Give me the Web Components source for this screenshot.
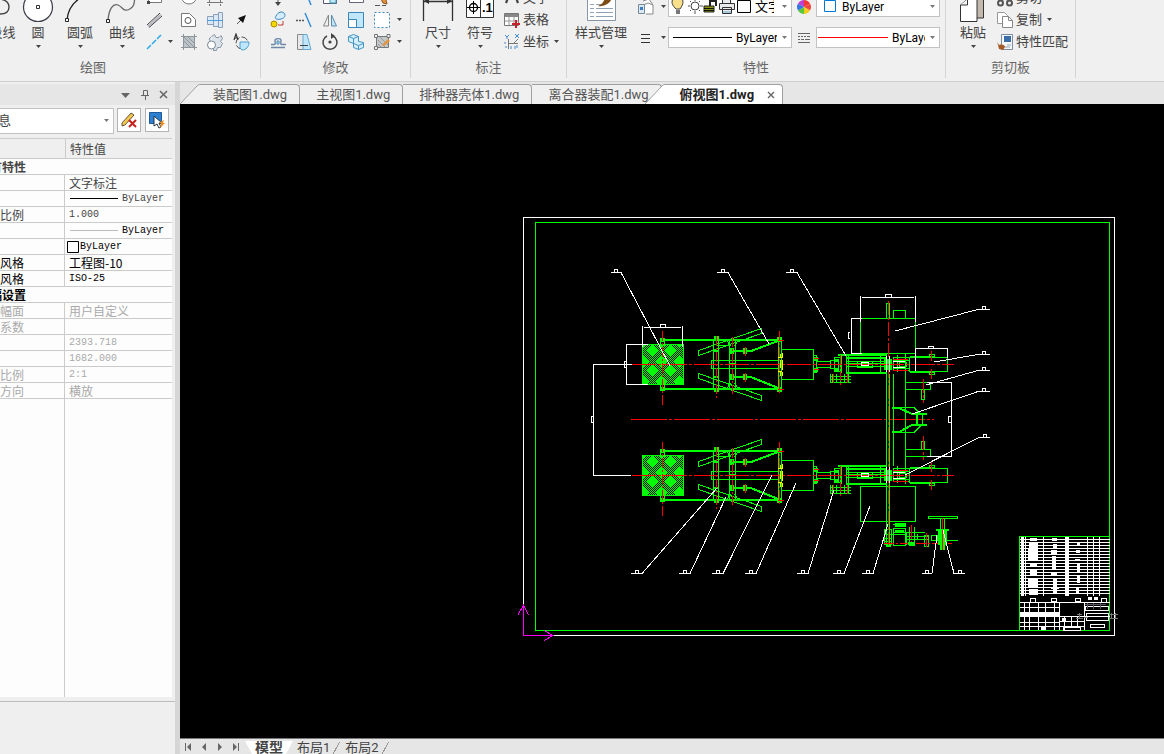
<!DOCTYPE html>
<html lang="zh-CN">
<head>
<meta charset="utf-8">
<title>俯视图1.dwg</title>
<style>
html, body { margin: 0; height: 100%; overflow: hidden; background: #e6e6e6; }
body { font: 13px/18px Roboto, "Noto Sans CJK SC", sans-serif; color: #444; }
</style>
</head>
<body>
<cad-app></cad-app>
<script>
const define = (name, html, setup) => {
  const t = document.createElement('template');
  t.innerHTML = html;
  customElements.define(name, class extends HTMLElement {
    connectedCallback() {
      if (this.shadowRoot) return;
      const r = this.attachShadow({ mode: 'open' });
      r.append(t.content.cloneNode(true));
      if (setup) setup(this, r);
    }
  });
};
const svg = (w, h, body, box) => `<svg width="${w}" height="${h}" viewBox="${box || `0 0 ${w} ${h}`}" fill="none" aria-hidden="true">${body}</svg>`;
const S = b => svg(18, 18, b);
const B = b => svg(36, 32, b, '0 -9 36 32');
const icons = {
  polyline: B('<path d="M6 14H22C28 14 31 11 31 7S28 0 22-1" stroke="#444" stroke-width="1.4"/>'),
  circle: B('<circle cx="18" cy="7" r="14.5" fill="#fff" stroke="#3a3d48" stroke-width="1.2"/><path d="M16.5 5.500h3v3h-3z" stroke="#333"/>'),
  arc: B('<path d="M5 20C6 9 11 2 20-3" stroke="#222" stroke-width="1.3"/><path d="M3.500 18.500h3v3h-3z" fill="#fff" stroke="#222"/>'),
  spline: B('<path d="M4 20C5 9 9 3 14 5S19 12 25 9.500 30 2 31-3" stroke="#666" stroke-width="1.3"/><path d="M2.500 19.500h3v3h-3z" fill="#fff" stroke="#222"/>'),
  dim: B('<path d="M3.500 21V-6M32.500 21V-6M4 1.500H32" stroke="#333" stroke-width="1.300"/><path d="M4 1l5-3v6zM32 1l-5-3v6z" fill="#333"/>'),
  symbol: B('<path d="M4.500-7v24.500h27V-7M18.500-7V17" fill="#fff" stroke="#333"/><circle cx="11.500" cy="7.500" r="4" stroke="#000" stroke-width="1.300"/><path d="M11.500 1v13M5 7.500h13" stroke="#000"/><text x="20" y="12" font-family="Liberation Sans" font-weight="700" font-size="13" fill="#000">.1</text>'),
  style: B('<path d="M4.500-8v28.500h28V-8" fill="#fff" stroke="#8496a8"/><path d="M7 4.500h4M7 8.500h4M7 12.500h4M7 16.500h4M13 8.500h17M13 12.500h17M13 16.500h17M13 4.500h5" stroke="#8fa1b4"/><path d="M15 6c5 1 12-2 14-8l-5-2c-3 2-2 7-9 10z" fill="#7d4c12"/>'),
  paste: B('<path d="M14.500-6h14v24h-14z" fill="#c4b8ae" stroke="#333"/><path d="M5.500 21.500V5l7-6h9.500v22.500z" fill="#fff" stroke="#333"/><path d="M5.500 5h7v-6" fill="#f5f5f5" stroke="#333"/>'),
  rect: S('<path d="M3.500 3.500h13v10h-13z" fill="#fff" stroke="#777"/><path d="M2 12h3v3H2z" fill="#444"/>'),
  mline: S('<path d="M3 15.500L16 3.500" stroke="#b9b9c4" stroke-width="2"/><path d="M2 14L15 2M4 16.500L17 5" stroke="#444"/>'),
  xline: S('<path d="M2 16l4-4M7 11l4-4M12 6l4-4" stroke="#28a8e8" stroke-width="1.500"/>'),
  ellipse: S('<ellipse cx="9" cy="9" rx="7" ry="6" fill="#fff" stroke="#777"/>'),
  region: S('<path d="M1.500 15.500v-13h8l6 6v7z" fill="#fff" stroke="#777"/><circle cx="8" cy="9.500" r="3" stroke="#555"/>'),
  hatch: S('<path d="M3.500 3.500h11v11h-11z" fill="#bcc4c8" stroke="#889"/><path d="M4 8l6 6M4 4l10 10M8 4l6 6M3.500 1v16M14.500 1v16M1 3.500h16M1 14.500h16" stroke="#8b979d"/>'),
  axis: S('<path d="M3.500 4v9.500h11V4M1 13.500h16M3.500 15v2M14.500 15v2" stroke="#777"/>'),
  shaft: S('<path d="M1.500 5.500h6v8h-6zM7.500 3.500h5v12h-5zM12.500 1.500h4v15h-4z" fill="#dbe9f6" stroke="#8ba0b8"/><path d="M1 9.500h16" stroke="#4a9fe0"/>'),
  gear: S('<path d="M5.500 3.500l3-2 1.500 3h3l2-2 1.500 3-2 3 2 2-2 4h-3l-1 3h-3v-3M5 9L3 6l2-2" fill="#dce2ea" stroke="#8a97a4"/><circle cx="5.500" cy="12" r="4" fill="#fff" stroke="#7a8794"/>'),
  arrow: S('<path d="M5 13l5-5" stroke="#555"/><path d="M14 4l-3 8-5-5z" fill="#111"/>'),
  contour: S('<circle cx="10" cy="10" r="6" stroke="#555" stroke-dasharray="7 2"/><path d="M8 9h9c0 5-3 8-7 8l-2-2z" fill="#bfe6fa" stroke="#4aa0cc"/><path d="M2 7l2-6 2 6M3 5h3" stroke="#333" stroke-width="1.200"/>'),
  move: S('<path d="M9 0v14M3 7h12" stroke="#555"/><path d="M9 17l-3-4h6z" fill="#444"/>'),
  trim: S('<path d="M4 9h5M12 9h5" stroke="#555" stroke-dasharray="2 1"/><path d="M10 1l6 15" stroke="#2a8ad8" stroke-width="1.400"/>'),
  array: S('<path d="M2.500 2.500h13v12h-13z" fill="#fff" stroke="#557"/><path d="M9 3h6v11H9z" fill="#bfe6fa" stroke="#49a"/>'),
  page: S('<path d="M2.500 1.500h14v12h-14z" fill="#fff" stroke="#667"/>'),
  erase: S('<path d="M6 6l4 8 4 1-1-4-5-8z" fill="#e4943a" stroke="#8a5520"/><path d="M2 16.500h5M9 16.500h4" stroke="#555"/>'),
  copy: S('<path d="M7 5c2-4 6-5 8-3s1 5-3 6-7 0-5-3z" fill="#d4ecfb" stroke="#3a87bb"/><circle cx="5" cy="13" r="3" fill="#f4d800" stroke="#a98c00"/><path d="M9 14h5v-4" stroke="#c63a30"/>'),
  extend: S('<path d="M1 9.500h9" stroke="#555" stroke-width="1.500" stroke-dasharray="2 1"/><path d="M10 2l6 14" stroke="#2a8ad8" stroke-width="1.400"/>'),
  mirror: S('<path d="M7.500 4v11h-5z" fill="#eee" stroke="#888"/><path d="M10.500 4v11h5z" fill="#bfe6fa" stroke="#5a8dac"/>'),
  scale: S('<path d="M1.500 1.500h15v15h-15z" fill="#bfe6fa" stroke="#3a87bb"/><path d="M1.500 8.500h8v8h-8z" fill="#fff" stroke="#3a87bb"/>'),
  select: S('<path d="M1.500 1.500h15v15h-15z" fill="#fff" stroke="#3a87bb" stroke-dasharray="2 2"/>'),
  offset: S('<path d="M2 14.500h14M2 11.500h3c2 0 1-2 1-4s6-3 6 0-1 4 1 4h4" stroke="#6d87a5" stroke-width="1.400"/><path d="M8 11V8h2v3z" stroke="#3a87bb"/>'),
  stretch: S('<path d="M2.500 1.500h7v15h-7z" fill="#e8e8e8" stroke="#888"/><path d="M8 1.500h4l4 15H8z" fill="#bfe6fa" stroke="#68a9cc"/><path d="M5 12.500h8" stroke="#444"/>'),
  rotate: S('<path d="M6 3a7 7 0 1 0 6 0" stroke="#444" stroke-width="1.500"/><path d="M10 0l4 3-4 3z" fill="#444"/><circle cx="9" cy="9" r="1.600" fill="#444"/>'),
  block: S('<path d="M1.500 3.500l5-2 5 2v5l5 1v5l-5 2-5-2v-4l-5-2z" fill="#d4eefb" stroke="#4394c2"/><path d="M1.500 3.500l5 2 5-2M6.500 5.500v5l5 2 5-2M11.500 12.500v4" stroke="#4394c2"/>'),
  edit: S('<path d="M3.500 3.500h12v11h-12z" fill="#c2c7ca" stroke="#777"/><path d="M5 7l7 7M5 11l3 3M7 4l8 8" stroke="#999"/><path d="M1.500 1.500h3v3h-3zM14 1.500h3v3h-3zM1.500 13.500h3v3h-3z" fill="#eee" stroke="#777"/><path d="M9 12l6-6 2 2-6 5z" fill="#e4943a"/>'),
  text: S('<path d="M3 14l5-13h2l5 13M5 10h8" stroke="#444" stroke-width="2.200"/>'),
  table: S('<path d="M1.500 2.500h14v12h-14z" fill="#fff" stroke="#777"/><path d="M2 3h13v3H2z" fill="#888"/><path d="M6 6v8M11 6v8M2 10h13" stroke="#999"/><path d="M13 9v8M9 13h8" stroke="#c8202a" stroke-width="2"/>'),
  coord: S('<path d="M5.500 6v10M5 10.500h10M10 11l5-5" stroke="#777"/><path d="M2 2l2 2 2-2M4 4v2M12 1l4 4M16 1l-4 4M2 9v2M2 14h2M8 13v3M12 13v3M14 12v3" stroke="#4489c8"/>'),
  match: S('<path d="M5.500 1.500h11v15h-11z" fill="#f4f6f8" stroke="#7d8ca0"/><path d="M8 3h7v6H8z" fill="#3b6ea8"/><path d="M11 12h4M9 14h5" stroke="#9ab"/><path d="M1 9l2 3c3-1 6 0 6 2l-2 3-4-1-1-4z" fill="#a65a24"/>'),
  pages: S('<path d="M1.500 1.500h7l3 3v8h-10z" fill="#fff" stroke="#999"/><path d="M6.500 5.500h6l4 4v7h-10z" fill="#fff" stroke="#888"/><path d="M12.500 5.500v4h4" stroke="#888"/>'),
  cut: S('<path d="M5 1l6 10M13 1L7 11" stroke="#555" stroke-width="1.600"/><circle cx="4.500" cy="14" r="2.500" stroke="#555" stroke-width="2"/><circle cx="13.500" cy="14" r="2.500" stroke="#555" stroke-width="2"/>'),
  layers: S('<path d="M6 3l6-2 4 6M5 8l6-3 5 2v9H9" fill="#fff" stroke="#888"/><path d="M1.500 6.500h6v9h-6z" fill="#dce8f2" stroke="#789"/><path d="M3 9h3v3H3z" fill="#3b7ec0"/>'),
  list: S('<path d="M4 5.500h9M4 9.500h9M4 13.500h9" stroke="#333"/>'),
  ltype: S('<path d="M3 4.500h12M3 7.500h12M3 10.500h12M3 13.500h12" stroke="#666"/><path d="M5 7.500h1M8 7.500h1M11 7.500h1M5 10.500h1M9 10.500h1" stroke="#f0f0f0"/>'),
  wheel: S('<g transform="translate(9 9)"><path d="M0 0V-7A7 7 0 0 1 6-3.500z" fill="#f03830"/><path d="M0 0L6-3.500A7 7 0 0 1 6 3.500z" fill="#f04840"/><path d="M0 0L6 3.500A7 7 0 0 1 0 7z" fill="#f4cc20"/><path d="M0 0V7A7 7 0 0 1-6 3.500z" fill="#58c838"/><path d="M0 0L-6 3.500A7 7 0 0 1-6-3.500z" fill="#3478e0"/><path d="M0 0L-6-3.500A7 7 0 0 1 0-7z" fill="#c040d0"/></g>'),
  brush: S('<path d="M2 12L11 2l3 2L5 14l-3 1z" fill="#f0c84a" stroke="#654"/><path d="M9 9l7 7M16 9l-7 7" stroke="#c8201c" stroke-width="2"/>'),
  pick: S('<path d="M1.500 1.500h12v11h-12z" fill="#2d7fd2" stroke="#205a98"/><path d="M6 5v10l3-2 2 4 2-1-2-4h3z" fill="#fff" stroke="#234"/><path d="M12 11l4-2-1 3h2l-5 5 1-4z" fill="#f08c1a"/>')
};
const tri = svg(7, 6, '<path d="M1 1h5L3.500 4z" fill="#444"/>');

define('tool-icon', `<style>:host{display:block;flex:none}svg{display:block}</style>`, (el, r) => {
  r.append(document.createRange().createContextualFragment(icons[el.getAttribute('name')]));
});

define('ribbon-group', `<style>
:host{display:flex;flex-direction:column;justify-content:flex-end;flex:none;box-sizing:border-box;height:78px;border-right:1px solid #d4d4d4}
.body{display:flex;align-items:flex-end;height:53px}
:host([end]) .body{justify-content:flex-end}
h2{margin:0;padding:6px 0 1px;font:inherit;line-height:18px;text-align:center;color:#666}
</style><div class="body"><slot></slot></div><h2></h2>`, (el, r) => { r.querySelector('h2').textContent = el.getAttribute('label'); });

define('big-tool', `<style>
:host{display:block;flex:none;width:42px}
button{display:flex;flex-direction:column;align-items:center;width:100%;padding:0 0 3px;border:0;background:none;font:inherit;color:inherit;white-space:nowrap}
.lab{margin:1px -9px 2px;line-height:18px} svg{display:block}
</style><button type="button"><tool-icon></tool-icon><span class="lab"><slot></slot></span>${tri}</button>`, (el, r) => {
  const i = document.createElement('tool-icon'); i.setAttribute('name', el.getAttribute('icon'));
  r.querySelector('tool-icon').replaceWith(i);
});

define('small-tool', `<style>
:host{display:block}
button{display:flex;align-items:center;justify-content:center;gap:2px;width:100%;height:22px;padding:0;border:0;background:none;font:inherit;color:inherit;white-space:nowrap}
:host([wide]) button{justify-content:flex-start}
svg{display:block;margin-left:2px}
:host([menu]:not([wide])) svg{margin:0}
</style><button type="button"><slot></slot></button>`, (el, r) => {
  const b = r.querySelector('button');
  const n = el.getAttribute('icon');
  if (n) { const i = document.createElement('tool-icon'); i.setAttribute('name', n); b.prepend(i); }
  if (el.hasAttribute('menu')) b.insertAdjacentHTML('beforeend', tri);
  if (el.title) b.setAttribute('aria-label', el.title);
});

define('value-combo', `<style>
:host{display:flex;align-items:center;box-sizing:border-box;height:21px;border:1px solid #c2c2c2;background:#fff;overflow:hidden}
select{appearance:none;flex:1;min-width:0;height:19px;margin:0;padding:0;border:0;background:none;font:12px/18px Roboto,"Noto Sans CJK SC",sans-serif;color:#000;text-overflow:clip}
svg{flex:none;margin:0 3px 0 4px}
:host([cjk]) select{font-size:13px}
:host([cjk]) svg{margin-left:7px}
:host([tall]){height:26px}
:host([tall]) select{height:24px;font-size:13px;padding-left:9px;color:#444}
</style><slot></slot><select><option></option></select>${tri.replace('#444', '#777')}`, (el, r) => {
  r.querySelector('option').textContent = el.getAttribute('value');
  r.querySelector('select').setAttribute('aria-label', el.getAttribute('label'));
});

define('cad-ribbon', `<style>
:host{display:flex;height:81px;flex:none;align-items:flex-start;background:#f0f0f0;border-bottom:1px solid #cfcfcf;overflow:hidden}
ribbon-group:first-of-type{margin-left:-74px;width:335px}
.tools{display:grid;grid-auto-rows:22px}
.draw{grid-template-columns:22px 11px 26px 26px 26px;padding-right:6px}
.modify{grid-template-columns:repeat(5,26px) 9px;padding:0 6px 0 4px}
.notes{width:63px;padding-left:2px}
.g3{padding-left:6px}
.g4{padding-left:3px}
.clip{width:77px;padding:0 2px 0 2px}
.g5{padding-left:6px}
.props{display:grid;grid-template-columns:26px 9px 124px 24px 124px;gap:10px 0;align-items:center;padding:0 5px 5px 1px;grid-auto-rows:21px}
svg{flex:none;display:block}
.flex{display:flex}
</style>
<ribbon-group label="绘图" end>
 <big-tool icon="polyline">多段线</big-tool><big-tool icon="circle">圆</big-tool><big-tool icon="arc">圆弧</big-tool><big-tool icon="spline">曲线</big-tool>
 <div class="tools draw">
 <small-tool icon="rect" title="矩形"></small-tool><span></span><small-tool icon="ellipse" title="椭圆"></small-tool><small-tool icon="axis" title="中心线"></small-tool><span></span>
 <small-tool icon="mline" title="平行线"></small-tool><span></span><small-tool icon="region" title="面域"></small-tool><small-tool icon="shaft" title="轴"></small-tool><small-tool icon="arrow" title="箭头"></small-tool>
 <small-tool icon="xline" title="构造线"></small-tool><small-tool menu title="更多直线"></small-tool><small-tool icon="hatch" title="填充"></small-tool><small-tool icon="gear" title="齿轮"></small-tool><small-tool icon="contour" title="局部放大"></small-tool>
 </div>
</ribbon-group>
<ribbon-group label="修改"><div class="tools modify">
 <small-tool icon="move" title="移动"></small-tool><small-tool icon="trim" title="裁剪"></small-tool><small-tool icon="array" title="阵列"></small-tool><small-tool icon="page" title="边界"></small-tool><small-tool icon="erase" title="删除"></small-tool><span></span>
 <small-tool icon="copy" title="复制对象"></small-tool><small-tool icon="extend" title="延伸"></small-tool><small-tool icon="mirror" title="镜像"></small-tool><small-tool icon="scale" title="缩放"></small-tool><small-tool icon="select" title="选择"></small-tool><small-tool menu title="选择方式"></small-tool>
 <small-tool icon="offset" title="偏移"></small-tool><small-tool icon="stretch" title="拉伸"></small-tool><small-tool icon="rotate" title="旋转"></small-tool><small-tool icon="block" title="块"></small-tool><small-tool icon="edit" title="编辑填充"></small-tool><small-tool menu title="更多编辑"></small-tool>
</div></ribbon-group>
<ribbon-group label="标注"><div class="flex g3"><big-tool icon="dim">尺寸</big-tool><big-tool icon="symbol">符号</big-tool></div>
 <div class="tools notes"><small-tool wide icon="text">文字</small-tool><small-tool wide icon="table">表格</small-tool><small-tool wide menu icon="coord">坐标</small-tool></div>
</ribbon-group>
<ribbon-group label="特性"><div class="flex g4"><big-tool icon="style" style="width:62px">样式管理</big-tool></div>
 <div class="props">
 <small-tool icon="layers" title="图层"></small-tool><small-tool menu title="图层菜单"></small-tool>
 <value-combo cjk label="图层" value="文字">${svg(86, 19, `
  <path d="M7 12c-3-3-4-5-4-7a5 5 0 0 1 11 0c0 2-1 4-3 7z" fill="#f8e08a" stroke="#444"/><path d="M7 13h4v4H7z" fill="#777"/>
  <circle cx="26" cy="9" r="4" fill="#fff" stroke="#444"/><path d="M26 2v2M26 14v3M19 9h2M31 9h3M21 4l1 1M30 13l1 1M21 14l1-1M30 5l1-1" stroke="#555"/>
  <path d="M35 9h10v6H35z" fill="#8a9010" stroke="#222"/><path d="M41 9V4h6v5" stroke="#222" stroke-width="2"/><path d="M35 11.500h10M35 13.500h10" stroke="#111"/>
  <path d="M53.500 6V1.500h8V6M50.500 6.500h15v6h-15zM53.500 10.500h9v6h-9z" fill="#e8eaec" stroke="#333"/><path d="M54 15h8" stroke="#68a9cc"/>
  <path d="M68.500 3.500h13v12h-13z" fill="#fff" stroke="#000"/>`)}</value-combo>
 <small-tool icon="wheel" title="颜色"></small-tool>
 <value-combo label="颜色" value="ByLayer">${svg(25, 19, '<path d="M7.500 3.500h11v11h-11z" fill="#fff" stroke="#0078d7"/>')}</value-combo>
 <small-tool icon="list" title="线宽"></small-tool><small-tool menu title="线宽菜单"></small-tool>
 <value-combo label="线宽" value="ByLayer">${svg(67, 19, '<path d="M4 9.500h59" stroke="#000"/>')}</value-combo>
 <small-tool icon="ltype" title="线型"></small-tool>
 <value-combo label="线型" value="ByLayer">${svg(75, 19, '<path d="M1 9.500h70" stroke="#f00"/>')}</value-combo>
 </div>
</ribbon-group>
<ribbon-group label="剪切板"><div class="flex g5"><big-tool icon="paste">粘贴</big-tool></div>
 <div class="tools clip"><small-tool wide icon="cut">剪切</small-tool><small-tool wide menu icon="pages">复制</small-tool><small-tool wide icon="match">特性匹配</small-tool></div>
</ribbon-group>`);

define('property-panel', `<style>
:host{display:flex;flex-direction:column;flex:none;box-sizing:border-box;width:188px;margin-left:-12px;padding-top:2px;background:#efefef;border-right:1px solid #d6d6d6}
header{display:flex;justify-content:flex-end;align-items:center;gap:8px;height:21px;padding-right:6px;background:#e6e6e6}
header button{display:grid;place-items:center;width:11px;height:14px;padding:0;border:0;background:none}
.bar{display:flex;gap:3px;padding:3px 6px 4px 0;align-items:flex-start}
.bar value-combo{width:126px}
.bar button{display:grid;place-items:center;box-sizing:border-box;width:24px;height:24px;padding:0;border:1px solid #b4b4b4;background:#fff}
.bar button+button{margin-left:1px}
.grid{flex:1;margin-right:3px;background:linear-gradient(90deg,#fdfdfd 76px,#cbcbcb 76px 77px,#fdfdfd 77px);border-top:1px solid #cbcbcb}
table{width:100%;border-collapse:separate;border-spacing:0;table-layout:fixed;font:12px/15px "Noto Sans CJK SC",sans-serif}
th,td{height:15px;padding:0 0 0 12px;border-bottom:1px solid #cbcbcb;text-align:left;white-space:nowrap;overflow:hidden;font-weight:400}
col:first-child{width:77px}
td{padding-left:4px}
thead th{height:19px;background:#efefef}
thead th+th{padding-left:4px;border-left:1px solid #cbcbcb}
.sec{padding-left:2px;font-weight:700;background:#fdfdfd}
.k{color:#000}.off{color:#aaa}
.n{font:10px/15px "Liberation Mono",monospace}
.row{display:flex;align-items:center;height:15px;gap:3px}
.row svg{flex:none}
.foot{height:52px;margin-top:4px;border-top:1px solid #bcbcbc}
</style>
<header><button aria-label="菜单">${svg(11, 8, '<path d="M1 2h9L5.500 7z" fill="#666"/>')}</button><button aria-label="固定">${svg(10, 12, '<path d="M3.500 6.500v-5h4v5M1 6.500h8M5.500 7v4" stroke="#666"/>')}</button><button aria-label="关闭">${svg(9, 9, '<path d="M1 1l7 7M8 1l-7 7" stroke="#666" stroke-width="1.500"/>')}</button></header>
<div class="bar"><value-combo tall label="选择" value="息"></value-combo><button aria-label="清除"><tool-icon name="brush"></tool-icon></button><button aria-label="选取"><tool-icon name="pick"></tool-icon></button></div>
<div class="grid"><table><colgroup><col><col></colgroup>
<thead><tr><th></th><th>特性值</th></tr></thead>
<tbody>
<tr><th colspan="2" class="sec">有特性</th></tr>
<tr><th></th><td>文字标注</td></tr>
<tr><th></th><td class="n"><div class="row">${svg(50, 3, '<path d="M1 1.500h48" stroke="#000"/>')}ByLayer</div></td></tr>
<tr><th>比例</th><td class="n">1.000</td></tr>
<tr><th></th><td class="n k"><div class="row">${svg(50, 3, '<path d="M1 1.500h48" stroke="#bbb"/>')}ByLayer</div></td></tr>
<tr><th></th><td class="n k" style="padding-left:2px"><div class="row" style="gap:1px">${svg(12, 12, '<path d="M.5.5h11v11h-11z" fill="#fff" stroke="#000"/>')}ByLayer</div></td></tr>
<tr class="k"><th>风格</th><td>工程图-10</td></tr>
<tr class="k"><th>风格</th><td class="n">ISO-25</td></tr>
<tr class="k"><th colspan="2" class="sec">幅设置</th></tr>
<tr class="off"><th>幅面</th><td>用户自定义</td></tr>
<tr class="off"><th>系数</th><td></td></tr>
<tr class="off"><th></th><td class="n">2393.718</td></tr>
<tr class="off"><th></th><td class="n">1682.000</td></tr>
<tr class="off"><th>比例</th><td class="n">2:1</td></tr>
<tr class="off"><th>方向</th><td>横放</td></tr>
</tbody></table></div><div class="foot"></div>`);

define('doc-tab', `<style>
:host{display:flex;height:20px;flex:none}
button{box-sizing:border-box;height:20px;padding:0 12px 0 16px;border:1px solid #a0a0a0;border-width:1px 1px 0 0;border-radius:0 4px 0 0;background:#f0f0f0;font:inherit;line-height:18px;color:#555;white-space:nowrap}
svg{display:block}
.slant{flex:none;display:none}
:host([slant]) .slant{display:block}
:host([slant]) button{padding-left:13px}
:host([active]){margin-left:-17px}
:host([active]) button{display:flex;align-items:center;gap:13px;padding:0 7px 0 15px;background:#fff;color:#222;font-weight:700}
.x{display:none}:host([active]) .x{display:block}
</style>
<svg class="slant" width="20" height="20"><path d="M0 20L17 2Q18 .5 20 .5V20z" fill="var(--tab,#f0f0f0)"/><path d="M0 20L17 2Q18 .5 20 .5" fill="none" stroke="#a0a0a0"/></svg><button type="button"><slot></slot>${svg(8, 8, '<path d="M1 1l6 6M7 1l-6 6" stroke="#666" stroke-width="1.400"/>').replace('<svg', '<svg class="x"')}</button>`);

define('layout-tab', `<style>
:host{display:block;flex:none;height:15px;margin-right:-5px}
button{height:15px;padding:0 10px 3px;border:0;background:none;font:inherit;line-height:12px;color:#444;white-space:nowrap}
:host([active]){margin-right:-6px}
:host([active]) button{font-size:14px;font-weight:700;background:#fff;clip-path:polygon(0 0,100% 0,calc(100% - 8px) 100%,8px 100%)}
:host(:not([active])) button{background:linear-gradient(118deg,transparent calc(100% - 8px),#999 calc(100% - 8px) calc(100% - 7px),transparent calc(100% - 7px))}
</style><button type="button"><slot></slot></button>`);

const line = (d, c, w = 1, extra = '') => `<path d="${d}" stroke="${c}" stroke-width="${w}" ${extra}/>`;
const G = '#0f0', R = '#f00', W = '#fff';
const dash = 'stroke-dasharray="10 2 2 2"';

/* One seeding unit, centred on y = 364; it occurs twice in the plan view. */
const unit = `
<g stroke="${G}">
<rect x="642.500" y="344.500" width="41" height="40" fill="url(#mesh)"/>
<path d="M660 340h120M660 389h120M733 351h18l27-10M733 377h18l27 11" stroke-width="2"/>
<path d="M660.500 338v8M664.500 338v8M660.500 384v7M664.500 384v7M713.500 341v47M718.500 341v47M729.500 341v47M735.500 341v47M711.500 360.500h67v8h-67zM778.500 339v50M781.500 339v50M716 345l13 0"/>
<path d="M698.500 350.500l63-22v5l-63 22zM698.500 373.500l63 22v5l-63-22zM727 341l4 5M738 341l-4 5M727 388l4-5M738 388l-4-5"/>
<path d="M781.500 349.500h32v30h-32zM813.500 355.500h3v17h-3zM817 361.500h13M817 367.500h13M830.500 360.500h8v8h-8zM834.500 357.500h6v14h-6z"/>
<path d="M846 361.500h41M846 363.500h41M846 366.500h41M841.500 355v18M846.500 355v18M848.500 355v18M880.500 355v18M857.500 361.500h15v6h-15z"/>
<path d="M838 355h49M846 358h41M846 373h41" stroke-width="2"/>
<path d="M830 376.500h21M830 379.500h21M830 382.500h21M832.500 374v9M836.500 374v9M840.500 374v9M844.500 374v9M848.500 374v9M830.500 374v9"/>
<path d="M893.500 357.500h16v13h-16zM897.500 355v17M905.500 355v17M893 360.500h17M893 368.500h17M899.500 362.500h7v4h-7zM909.500 357.500h38v14h-38zM909.500 356.500h25M909.500 372.500h25M929.500 354.500h5v3h-5zM929.500 371.500h5v3h-5z"/>
</g>
<g fill="${G}"><path d="M660 338h5v4h-5zM660 387h5v4h-5zM714 336h5v5h-5zM714 388h5v4h-5zM714 350h5v2h-5zM714 376h5v2h-5zM730 348h4v6h-4zM730 374h4v6h-4zM743 348h4v6h-4zM743 374h4v6h-4zM730 363h5v2h-5zM777 337h5v5h-5zM777 387h5v5h-5zM814 357h4v4h-4zM814 368h4v4h-4zM834 359h5v3h-5zM834 368h5v3h-5zM884 359h8v11h-8z"/></g>
${line('M632 364.500H954', R, 1, 'stroke-dasharray="24 2 3 2"')}
${line('M662.500 331V405M716.500 336V398M732.500 337V394M745.500 347v9M745.500 373v9M779.500 331V394M840.500 355V386M833.500 374v9M847.500 374v9M931.500 351v10M931.500 369v10', R, 1, dash)}
${line('M778 340.500h6M778 389.500h6M814 358.500h5M814 369.500h5M893 359.500h15M893 370.500h15', R)}
${line('M780.500 354v4M780.500 360v8M780.500 371v5M782.500 353v5M782.500 360v10M782.500 372v4M778 357.500h4M778 371.500h4', '#ff0')}
${line('M861.500 362.500h7v3h-7zM886.500 356v16M889.500 356v16M893 361.500h12M893 367.500h12', W)}`;

const leaders = [
  [611, 272, 621, 670, 366], [717, 272, 728, 769, 344], [786, 272, 797, 846, 356],
  [990, 309, 978, 895, 331], [990, 354, 978, 934, 362], [990, 370, 978, 926, 385], [990, 391, 978, 912, 414], [990, 437, 979, 905, 475],
  [631, 573, 642, 717, 488], [679, 573, 690, 726, 497], [712, 573, 723, 772, 475], [745, 573, 756, 796, 483],
  [797, 573, 808, 834, 490], [833, 573, 844, 870, 506], [862, 573, 873, 888, 524], [922, 573, 932, 937, 535], [965, 573, 954, 943, 530]
].map(([a, y, b, c, d]) => `M${a} ${y + .5}H${b}L${c} ${d}M${(a + b) / 2 - 1.5 | 0}.5 ${y + .5}v-3h3v3`).join('');

let rows = '';
for (let y = 539; y < 596; y += 3) rows += `M1020 ${y}.5h90`;
const sheet = `
<path d="${rows}M1022.500 537v59M1025.500 537v59M1043.500 537v59M1065.500 537v59M1068.500 537v59M1087.500 537v59M1093.500 537v59M1099.500 537v59M1020 602.500h90M1020 607.500h40M1020 612.500h40M1020 616.500h40M1020 622.500h40M1020 626.500h40M1024.500 603v27M1029.500 603v27M1038.500 603v27M1045.500 603v27M1054.500 603v27M1059.500 603v27M1084.500 603v27M1060 616.500h50M1060 621.500h25M1064.500 617v13M1071.500 617v9M1077.500 617v9M1060 626.500h25" stroke="#fff"/>
<path d="M1021 537h3v59h-3zM1029 543h9v5h-9zM1028 549h10v11h-10zM1030 563h7v4h-7zM1030 570h7v5h-7zM1028 578h10v10h-10zM1029 589h9v6h-9zM1030 538h7v3h-7zM1052 538h5v3h-5zM1053 544h4v4h-4zM1051 550h6v4h-6zM1052 556h4v14h-4zM1051 572h6v4h-6zM1053 579h4v14h-4zM1051 587h8v2h-8zM1066 537h3v59h-3zM1077 543h3v3h-3zM1076 550h4v3h-4zM1075 559h5v2h-5zM1077 563h3v9h-3zM1077 575h3v8h-3zM1076 587h3v6h-3zM1020 613h25v3h-25zM1046 613h13v3h-13zM1088 597h4v3h-4zM1094 597h4v3h-4zM1041 627h4v3h-4zM1062 618h4v3h-4z" fill="#fff"/>
<path d="M1030.500 598.500h5v4h-5zM1051.500 598.500h5v3h-5zM1075.500 598.500h5v3h-5zM1101.500 598.500h5v4h-5zM1085.500 606.500h23v4h-23zM1086.500 613.500h22v7h-22zM1090.500 624.500h14v3h-14zM1063.500 627.500h17v3h-17z" stroke="#fff"/>
<path d="M1077 614.500h5M1079.500 613v6M1084 617.500h4M1109 614.500h9M1111.500 613v6M1115.500 613v6M1109 618.500h9M1076 618.500h7" stroke="#777"/>
<path d="M1085 604.500h21M1087.500 603v6M1093.500 603v6M1100.500 603v6" stroke="#556"/>`;

define('drawing-view', `<style>
:host{display:block;flex:1;min-height:0;background:#000}
svg{display:block;width:100%;height:100%}
</style>
<svg viewBox="180 104 984 634" preserveAspectRatio="xMinYMin meet" fill="none" shape-rendering="crispEdges" role="img" aria-label="俯视图">
<defs>
<pattern id="dots" width="2" height="2" patternUnits="userSpaceOnUse"><path d="M0 0h1v1H0zM1 1h1v1H1z" fill="#0f0"/></pattern>
<pattern id="mesh" width="18" height="20" patternUnits="userSpaceOnUse" x="643" y="345"><path d="M0 0h18v20H0z" fill="url(#dots)"/><path d="M9 0l6 6-6 6-6-6zM0 10l6 6-6 6zM18 10l-6 6 6 6zM0 0l2 0-2 2zM18 0h-2l2 2z" fill="#0f0"/></pattern>
</defs>
<path d="M523.500 217.500h591v418h-591z" stroke="#fff"/>
<path d="M535.500 222.500h574v408h-574z" stroke="#0f0"/>
${line('M631 419.500H934', R, 1, 'stroke-dasharray="36 2 3 2"')}
<g stroke="${G}">
<path d="M886.500 374v150M889.500 374v150M893.500 374v92M905.500 354v130M860.500 318.500h55v35h-55zM893.500 318v-8h12v8M886.500 318v-15h3v15M905.500 382.500h25v7h-25zM905.500 449.500h25v7h-25zM921.500 390v9h3v-9M921.500 449v-8h3v8M892 407.500h22l7 7M892 432.500h22l7-7M922.500 414v11M860.500 486.500h55v35h-55z"/>
<path d="M892 408h7l13 6h15M892 432h7l13-7h15M917 414v11" stroke-width="2"/>
<path d="M884.500 529.500h7v15h-7zM893.500 528.500h12v17h-12zM893 524.500h13M893 532.500h32M905 536.500h24M905 539.500h24M884 534.500h22M884 538.500h8M884 541.500h8M909.500 527v18h5v-18M924.500 535.500h4v11h-4zM886.500 521v24M889.500 521v24M928.500 516.500h29v2h-29zM940.500 518v12M944.500 518v12M931.500 535.500h6v5h-6zM946 540.500h12M906.500 532v13M917.500 534v6"/>
</g>
${line('M888.500 301V548M923.500 379v24M923.500 436v24M911.500 525v21M926.500 533v15M942.500 518v30', R, 1, 'stroke-dasharray="14 2 3 2"')}
${line('M884 543.500H952', R, 1, dash)}
<path d="M938 529h9v16h-9zM936 529h13v2h-13zM940 545h5v5h-5zM886 545h5v2h-5zM895 523h11v4h-11zM895 530h9v3h-9zM908 542h7v3h-7z" fill="#0f0"/>
${line('M942.500 530v20', R)}
${unit}
<g transform="translate(0 111)">${unit}</g>
<path d="M642.500 326v21M682.500 326v21M644 327.500h37M660.500 327v-3h5v3M648 344.500h-21.500v40H648M626 361.500h-2v6h2M632 364.500h-38.500v111H631M593 416.500h-2v6h2M860.500 296v26M915.500 296v26M862 297.500h52M885.500 297v-3h6v3M862 318.500H851.500v35H862M850 332.500h-2v6h2M915.500 371v-22.500h32v9M928.500 348v-2h5v2M927 382.500h25M951.500 382v74M927 456.500h25M951 416.500h-3v6h3" stroke="#fff"/>
<path d="${leaders}" stroke="#fff"/>
${sheet}
<path d="M1019.500 630V536.500h90" stroke="#0f0"/>
<path d="M523.500 635.500V606M523.500 635.500H553M518 615l5.500-10 5 10M544 630.500l9 5-9 5" stroke="#f0f"/>
</svg>`);

define('cad-app', `<style>
:host{display:flex;flex-direction:column;height:100vh;overflow:hidden;background:#e6e6e6}
.work{display:flex;flex:1;min-height:0}
.split{flex:none;width:4px;background:#d6d6d6}
main{display:flex;flex:1;min-width:0;flex-direction:column}
.docs{display:flex;flex:none;padding-top:2px}
.layouts{display:flex;flex:none;height:15px;border-top:1px solid #777;overflow:hidden}
.nav{display:flex;align-items:center;width:65px;flex:none}
.nav button{display:grid;place-items:center;width:16px;height:15px;padding:0;border:0;background:none}
</style>
<cad-ribbon></cad-ribbon>
<div class="work"><property-panel></property-panel><div class="split"></div>
<main><nav class="docs"><doc-tab slant>装配图1.dwg</doc-tab><doc-tab>主视图1.dwg</doc-tab><doc-tab>排种器壳体1.dwg</doc-tab><doc-tab>离合器装配1.dwg</doc-tab><doc-tab slant active style="--tab:#fff">俯视图1.dwg</doc-tab></nav>
<drawing-view></drawing-view>
<div class="layouts"><div class="nav">
<button aria-label="第一个">${svg(8, 8, '<path d="M1.500 0v8" stroke="#666"/><path d="M7 0v8L3 4z" fill="#666"/>')}</button><button aria-label="上一个">${svg(8, 8, '<path d="M6 0v8L2 4z" fill="#666"/>')}</button><button aria-label="下一个">${svg(8, 8, '<path d="M2 0v8l4-4z" fill="#666"/>')}</button><button aria-label="最后一个">${svg(8, 8, '<path d="M6.500 0v8" stroke="#666"/><path d="M1 0v8l4-4z" fill="#666"/>')}</button></div>
<layout-tab active>模型</layout-tab><layout-tab>布局1</layout-tab><layout-tab>布局2</layout-tab></div>
</main></div>`);
</script>
</body>
</html>
